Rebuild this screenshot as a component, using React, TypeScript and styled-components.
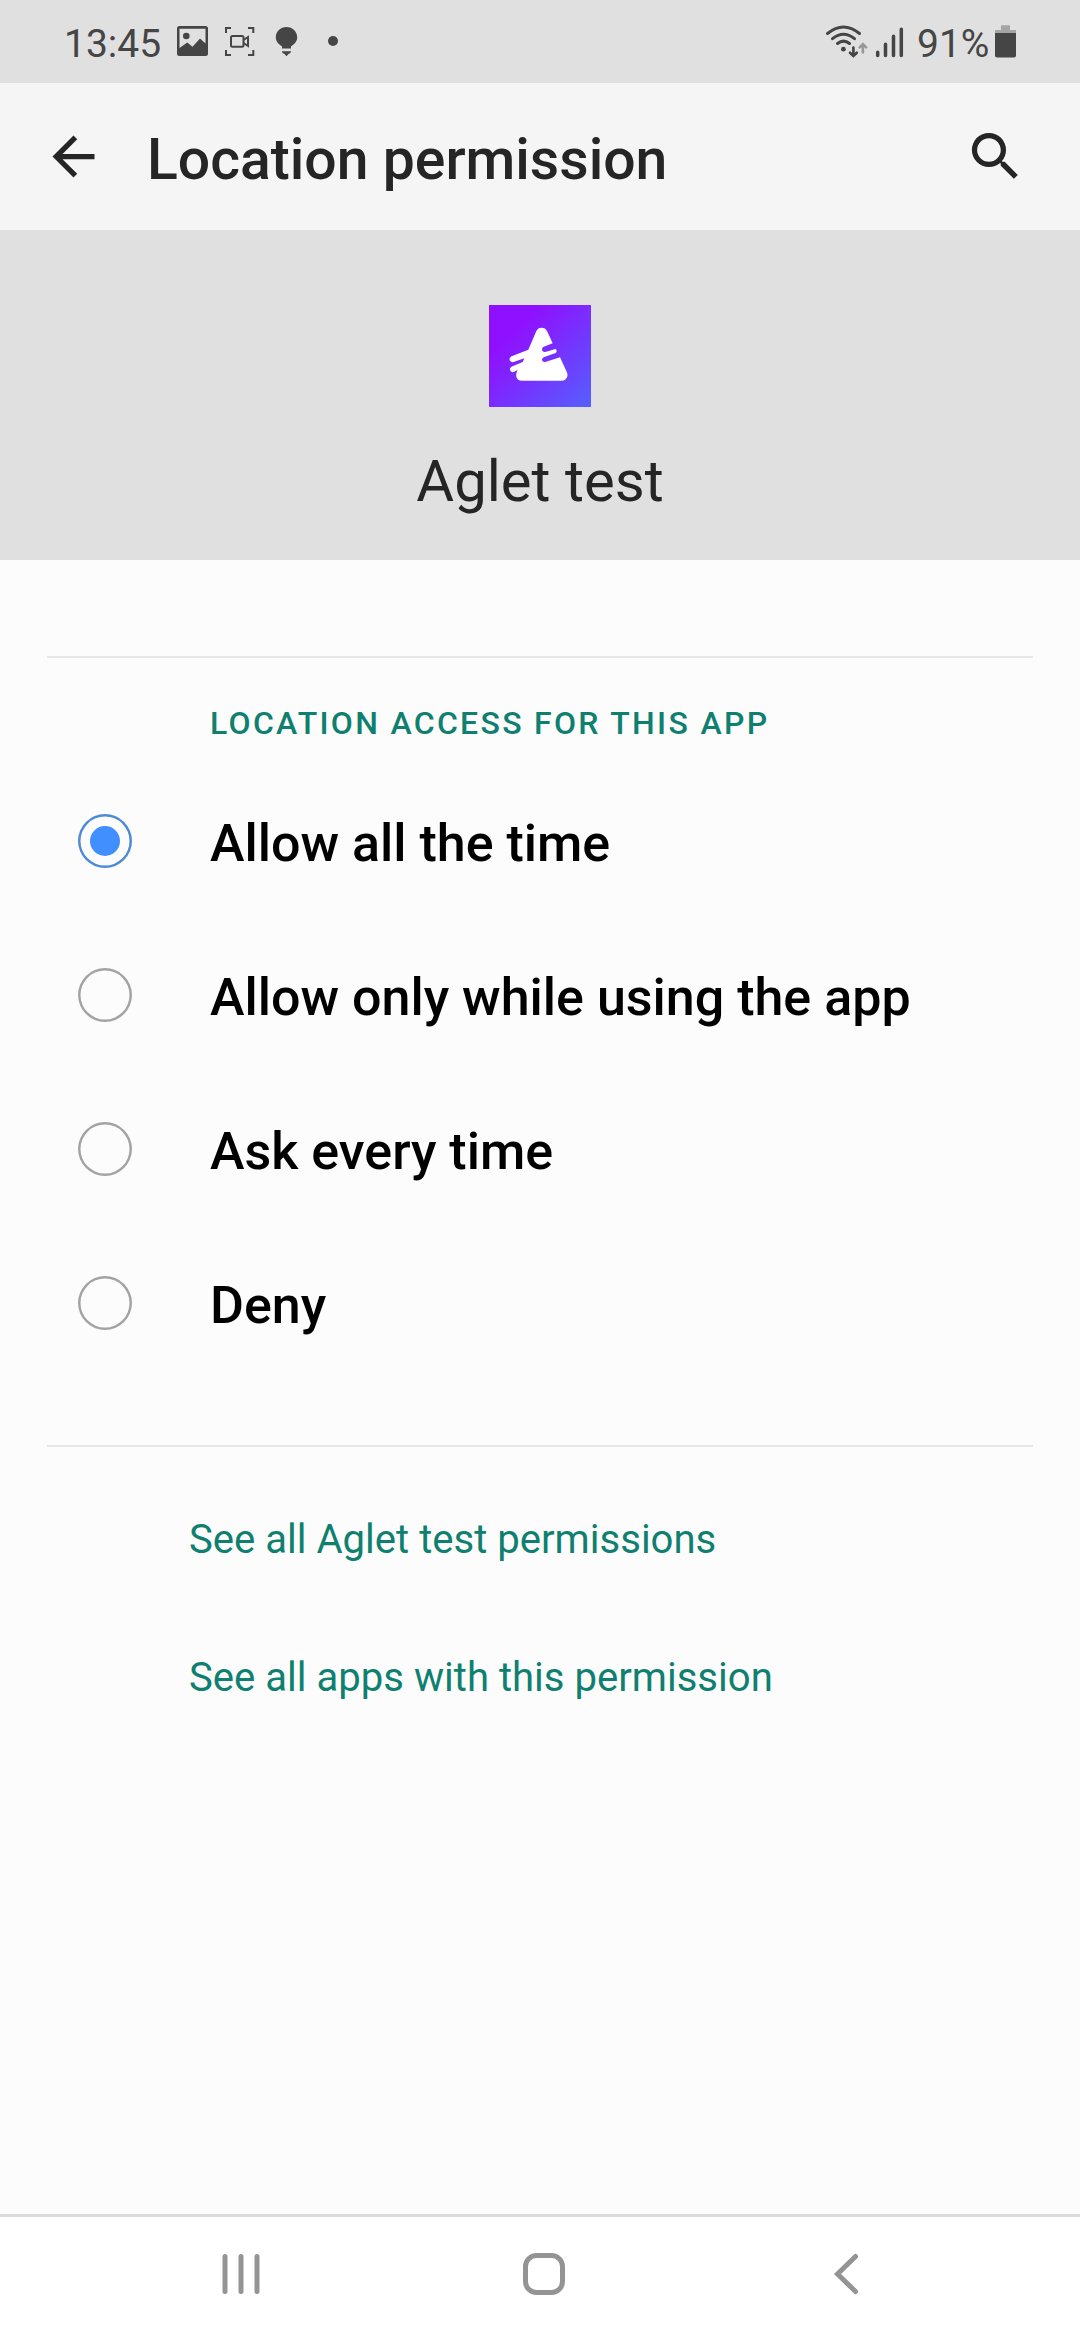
import React, { useState } from "react";
import styled, { createGlobalStyle } from "styled-components";

const GlobalStyle = createGlobalStyle`
  * { box-sizing: border-box; }
  body { margin: 0; background: #fcfcfc; font-family: Roboto, "Noto Sans", sans-serif; }
`;

const Screen = styled.div`
  display: flex;
  flex-direction: column;
  width: 1080px;
  height: 2340px;
  overflow: hidden;
  background: #fcfcfc;
`;

const StatusBar = styled.div`
  display: flex;
  justify-content: space-between;
  height: 83px;
  padding: 0 64px 0 64px;
  background: #e0e0e0;
  color: #454545;
`;

const StatusGroup = styled.div`
  display: flex;
  align-items: flex-start;
`;

const StatusText = styled.span<{ $width: number }>`
  width: ${(p) => p.$width}px;
  padding-top: 21px;
  font-size: 39px;
  line-height: 46px;
  white-space: nowrap;
`;

const StatusIcons = styled.svg`
  display: block;
  height: 83px;
`;

const AppBar = styled.header`
  display: flex;
  align-items: center;
  height: 147px;
  padding: 0 53px 0 42px;
  background: #f5f5f5;
  color: #252525;
`;

const Title = styled.h1`
  flex: 1;
  margin: 0;
  padding: 7px 0 0 42px;
  font-size: 57.1px;
  font-weight: 500;
  line-height: 66px;
`;

const IconButton = styled.button`
  width: 63px;
  height: 63px;
  padding: 0;
  border: 0;
  background: none;
  color: inherit;
  svg { display: block; width: 63px; height: 63px; fill: currentColor; }
`;

const AppHeader = styled.section`
  display: flex;
  flex-direction: column;
  align-items: center;
  gap: 41px;
  height: 330px;
  padding-top: 75px;
  background: #e0e0e0;
  svg { display: block; width: 102px; height: 102px; }
`;

const AppName = styled.div`
  font-size: 58px;
  line-height: 67px;
  color: #252525;
`;

const Content = styled.main`
  display: flex;
  flex: 1;
  flex-direction: column;
  padding: 96px 47px 0;
`;

const Divider = styled.hr`
  width: 100%;
  height: 2px;
  margin: 0;
  border: 0;
  background: #e6e6e6;
`;

const SectionLabel = styled.h2`
  height: 106px;
  margin: 0;
  padding: 46px 0 0 163px;
  font-size: 32px;
  font-weight: 500;
  line-height: 38px;
  letter-spacing: 2.3px;
  color: #0f8070;
`;

const OptionList = styled.div`
  display: flex;
  flex-direction: column;
  margin-bottom: 65px;
`;

const Option = styled.div`
  display: flex;
  align-items: center;
  height: 154px;
  padding-left: 31px;
`;

const RadioRing = styled.span<{ $checked: boolean }>`
  display: grid;
  place-items: center;
  width: 54px;
  height: 54px;
  border-radius: 50%;
  box-shadow: inset 0 0 0 2.5px ${(p) => (p.$checked ? "#4d8bd6" : "#a3a3a3")};
`;

const RadioDot = styled.span`
  width: 30px;
  height: 30px;
  border-radius: 50%;
  background: #418fff;
`;

const OptionLabel = styled.span`
  padding: 5px 0 0 78px;
  font-size: 52px;
  font-weight: 500;
  line-height: 60px;
  color: #000;
`;

const LinkList = styled.div`
  display: flex;
  flex-direction: column;
  padding: 24px 0 0 142px;
`;

const LinkRow = styled.div`
  display: flex;
  align-items: center;
  height: 138px;
  font-size: 40.1px;
  line-height: 46px;
  color: #0f8070;
`;

const NavBar = styled.nav`
  display: flex;
  align-items: center;
  justify-content: space-between;
  height: 126px;
  padding: 0 210px 9px 218px;
  border-top: 3px solid #dcdcdc;
  background: #fff;
  svg { display: block; width: 46px; height: 46px; fill: none; stroke: #949494; stroke-width: 5; stroke-linecap: round; }
`;

const OPTIONS = ["Allow all the time", "Allow only while using the app", "Ask every time", "Deny"];
const LINKS = ["See all Aglet test permissions", "See all apps with this permission"];

const NotificationIcons = () => (
  <StatusIcons width="170" viewBox="170 0 170 83" fill="#454545">
    <path
      fillRule="evenodd"
      d="M179.500 26h26a2.500 2.500 0 0 1 2.500 2.500v25a2.500 2.500 0 0 1-2.500 2.500h-26a2.500 2.500 0 0 1-2.500-2.500v-25a2.500 2.500 0 0 1 2.500-2.500zM179.500 28.700v19.300l7.800-5.600 5.200 4.400 7.500-8.300 5.500 5V28.700z"
    />
    <circle cx="186.300" cy="36" r="3.300" />
    <g fill="none" stroke="#454545" strokeWidth="2">
      <path d="M226 33v-5h5M248 28h5.300v5M226 50v5h5M248 55h5.300v-5" />
      <rect x="231" y="36" width="12.500" height="10.800" rx="1.500" />
      <path d="M243.500 40l4.500-3v9l-4.500-3" />
    </g>
    <path d="M286.500 27c-6 0-10.700 4.700-10.700 10.300 0 4 2.500 6.800 6.200 9v2.200h9v-2.200c3.700-2.200 6.200-5 6.200-9C297.200 31.700 292.500 27 286.500 27zM282 51.300h9c0 1.500-1 2.200-2.300 2.500l-2.200 2.500-2.200-2.500c-1.300-.3-2.300-1-2.300-2.500z" />
    <circle cx="333" cy="41" r="5" />
  </StatusIcons>
);

const SignalIcons = () => (
  <StatusIcons width="92" viewBox="825 0 92 83" fill="none" stroke="#454545" strokeLinecap="round">
    <path strokeWidth="3" d="M827.500 33.500Q843.500 20.500 859.500 33.500M832.500 38.700Q843.500 29.800 854.500 38.700M837.500 43.500Q843.500 38.800 849.500 43.500" />
    <circle cx="843.400" cy="49.200" r="2.400" fill="#454545" stroke="none" />
    <path strokeWidth="2.600" d="M853.400 47.500v7.500M850 52.700l3.400 3.300 3.400-3.300" />
    <path stroke="#989898" strokeWidth="2.600" d="M862.900 52.500v-7M859.700 47.300l3.200-3.200 3.200 3.200" />
    <path strokeWidth="3.500" d="M877.700 52.200v3.200M885.500 44.200v11.200M893.500 36.300v19.100M901.300 29.200v26.200" />
  </StatusIcons>
);

const BatteryIcon = () => (
  <StatusIcons width="21" viewBox="995 0 21 83">
    <path fill="#a5a5a5" d="M1001 25.300h9v4.700h6v4h-21v-4h6z" />
    <path fill="#454545" d="M995 33h21v22.500a2 2 0 0 1-2 2h-17a2 2 0 0 1-2-2z" />
  </StatusIcons>
);

const AppLogo = () => (
  <svg viewBox="327 45 306 306">
    <defs>
      <linearGradient id="logoFill" x1="0" y1="0" x2="1" y2="1">
        <stop offset="0.250" stopColor="#8f10ff" />
        <stop offset="1" stopColor="#5560ff" />
      </linearGradient>
    </defs>
    <rect x="327" y="45" width="306" height="306" fill="url(#logoFill)" />
    <path
      fill="#fff"
      d="M469 123Q474 113 485 113Q496 113 501 123L518 160L491 170Q485 173 486 180Q488 187 496 186L526 177Q530 178 530 184Q530 188 525 190L491 202Q485 205 486 211Q488 217 496 216L540 202L560 245Q565 256 560 263Q556 272 545 272H425Q414 272 410 263Q406 253 413 240L401 246Q393 248 390 241Q388 234 394 230L428 216L433 205L401 216Q392 218 389 211Q387 203 395 199L445 179Z"
    />
  </svg>
);

export default function App() {
  const [selected, setSelected] = useState(0);
  return (
    <>
      <GlobalStyle />
      <Screen>
        <StatusBar>
          <StatusGroup>
            <StatusText $width={106}>13:45</StatusText>
            <NotificationIcons />
          </StatusGroup>
          <StatusGroup>
            <SignalIcons />
            <StatusText $width={78}>91%</StatusText>
            <BatteryIcon />
          </StatusGroup>
        </StatusBar>
        <AppBar>
          <IconButton aria-label="Back">
            <svg viewBox="0 0 24 24">
              <path d="M20 11H7.830l5.590-5.590L12 4l-8 8 8 8 1.410-1.410L7.830 13H20v-2z" />
            </svg>
          </IconButton>
          <Title>Location permission</Title>
          <IconButton aria-label="Search">
            <svg viewBox="0 0 24 24">
              <path d="M15.500 14h-.79l-.28-.27A6.471 6.471 0 0 0 16 9.500 6.500 6.500 0 1 0 9.500 16c1.610 0 3.090-.59 4.230-1.570l.27.28v.79l5 4.990L20.490 19l-4.990-5zm-6 0C7.010 14 5 11.990 5 9.500S7.010 5 9.500 5 14 7.010 14 9.500 11.990 14 9.500 14z" />
            </svg>
          </IconButton>
        </AppBar>
        <AppHeader>
          <AppLogo />
          <AppName>Aglet test</AppName>
        </AppHeader>
        <Content>
          <Divider />
          <SectionLabel>LOCATION ACCESS FOR THIS APP</SectionLabel>
          <OptionList role="radiogroup">
            {OPTIONS.map((label, i) => (
              <Option key={label} role="radio" aria-checked={i === selected} onClick={() => setSelected(i)}>
                <RadioRing $checked={i === selected}>{i === selected && <RadioDot />}</RadioRing>
                <OptionLabel>{label}</OptionLabel>
              </Option>
            ))}
          </OptionList>
          <Divider />
          <LinkList>
            {LINKS.map((label) => (
              <LinkRow key={label}>{label}</LinkRow>
            ))}
          </LinkList>
        </Content>
        <NavBar>
          <svg viewBox="0 0 46 46">
            <path d="M7 5.500v35M23 5.500v35M39 5.500v35" />
          </svg>
          <svg viewBox="0 0 46 46">
            <rect x="4.500" y="4.500" width="37" height="37" rx="11" />
          </svg>
          <svg viewBox="0 0 46 46">
            <path d="M31.500 5.500L13.500 23l18 17.500" />
          </svg>
        </NavBar>
      </Screen>
    </>
  );
}
